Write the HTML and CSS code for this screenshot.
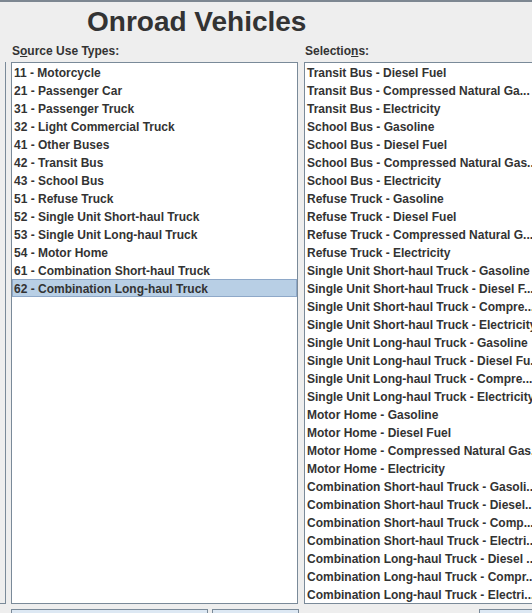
FILE: index.html
```html
<!DOCTYPE html>
<html>
<head>
<meta charset="utf-8">
<link rel="stylesheet" href="styles.css">
</head>
<body>
<div class="topbar"></div>
<div class="title">Onroad Vehicles</div>
<div class="main">
  <div class="stub"></div>
  <div class="col col-left">
    <div class="label">S<span class="mn">o</span>urce Use Types:</div>
    <div class="list list-left">
      <div class="item">11 - Motorcycle</div>
      <div class="item">21 - Passenger Car</div>
      <div class="item">31 - Passenger Truck</div>
      <div class="item">32 - Light Commercial Truck</div>
      <div class="item">41 - Other Buses</div>
      <div class="item">42 - Transit Bus</div>
      <div class="item">43 - School Bus</div>
      <div class="item">51 - Refuse Truck</div>
      <div class="item">52 - Single Unit Short-haul Truck</div>
      <div class="item">53 - Single Unit Long-haul Truck</div>
      <div class="item">54 - Motor Home</div>
      <div class="item">61 - Combination Short-haul Truck</div>
      <div class="item selected">62 - Combination Long-haul Truck</div>
    </div>
  </div>
  <div class="col col-right">
    <div class="label">Selectio<span class="mn">n</span>s:</div>
    <div class="list list-right">
      <div class="item">Transit Bus - Diesel Fuel</div>
      <div class="item">Transit Bus - Compressed Natural Ga...</div>
      <div class="item">Transit Bus - Electricity</div>
      <div class="item">School Bus - Gasoline</div>
      <div class="item">School Bus - Diesel Fuel</div>
      <div class="item">School Bus - Compressed Natural Gas...</div>
      <div class="item">School Bus - Electricity</div>
      <div class="item">Refuse Truck - Gasoline</div>
      <div class="item">Refuse Truck - Diesel Fuel</div>
      <div class="item">Refuse Truck - Compressed Natural G...</div>
      <div class="item">Refuse Truck - Electricity</div>
      <div class="item">Single Unit Short-haul Truck - Gasoline</div>
      <div class="item">Single Unit Short-haul Truck - Diesel F...</div>
      <div class="item">Single Unit Short-haul Truck - Compre...</div>
      <div class="item">Single Unit Short-haul Truck - Electricity</div>
      <div class="item">Single Unit Long-haul Truck - Gasoline</div>
      <div class="item">Single Unit Long-haul Truck - Diesel Fu...</div>
      <div class="item">Single Unit Long-haul Truck - Compre...</div>
      <div class="item">Single Unit Long-haul Truck - Electricity</div>
      <div class="item">Motor Home - Gasoline</div>
      <div class="item">Motor Home - Diesel Fuel</div>
      <div class="item">Motor Home - Compressed Natural Gas...</div>
      <div class="item">Motor Home - Electricity</div>
      <div class="item">Combination Short-haul Truck - Gasoli...</div>
      <div class="item">Combination Short-haul Truck - Diesel...</div>
      <div class="item">Combination Short-haul Truck - Comp...</div>
      <div class="item">Combination Short-haul Truck - Electri...</div>
      <div class="item">Combination Long-haul Truck - Diesel ...</div>
      <div class="item">Combination Long-haul Truck - Compr...</div>
      <div class="item">Combination Long-haul Truck - Electri...</div>
    </div>
  </div>
</div>
<div class="buttons">
  <div class="btn btn-1"></div>
  <div class="btn btn-2"></div>
  <div class="spacer"></div>
  <div class="btn btn-3"></div>
</div>
</body>
</html>
```
FILE: styles.css
```css
html, body {
  margin: 0;
  padding: 0;
  width: 532px;
  height: 613px;
  overflow: hidden;
  background: #eeeeee;
  font-family: "Liberation Sans", Arial, sans-serif;
  color: #333333;
}
.topbar {
  height: 2px;
  background: #7d8791;
}
.title {
  margin-top: 4px;
  padding-left: 87px;
  height: 32px;
  line-height: 32px;
  font-size: 28px;
  font-weight: bold;
  white-space: nowrap;
}
.main {
  display: flex;
  margin-top: 6px;
  height: 560px;
}
.stub {
  width: 5px;
  height: 541px;
  margin-top: 18px;
  border-right: 1px solid #7a8a99;
  border-bottom: 1px solid #7a8a99;
  flex: none;
}
.col {
  display: flex;
  flex-direction: column;
  flex: none;
}
.col-left {
  margin-left: 5px;
  width: 287px;
}
.col-right {
  margin-left: 6px;
  width: 260px;
}
.label {
  font-size: 12px;
  font-weight: bold;
  line-height: 14px;
  height: 14px;
  padding-left: 1px;
  margin-bottom: 4px;
  white-space: nowrap;
}
.mn {
  text-decoration: underline;
  text-underline-offset: 1px;
}
.list {
  background: #ffffff;
  border: 1px solid #7a8a99;
  height: 540px;
  overflow: hidden;
}
.item {
  height: 18px;
  line-height: 20px;
  font-size: 12px;
  font-weight: bold;
  padding-left: 2px;
  white-space: nowrap;
  overflow: hidden;
  box-sizing: border-box;
}
.item.selected {
  background: #b8cfe5;
  border: 1px solid #8ea8c8;
  line-height: 18px;
  padding-left: 1px;
}
.buttons {
  display: flex;
  margin-top: 5px;
  padding-left: 11px;
  height: 20px;
}
.btn {
  height: 20px;
  box-sizing: border-box;
  border: 1px solid #7a8a99;
  background: #dde8f3;
  flex: none;
}
.btn-1 {
  width: 197px;
}
.btn-2 {
  margin-left: 4px;
  width: 87px;
}
.spacer {
  width: 180px;
  flex: none;
}
.btn-3 {
  width: 80px;
}
```
